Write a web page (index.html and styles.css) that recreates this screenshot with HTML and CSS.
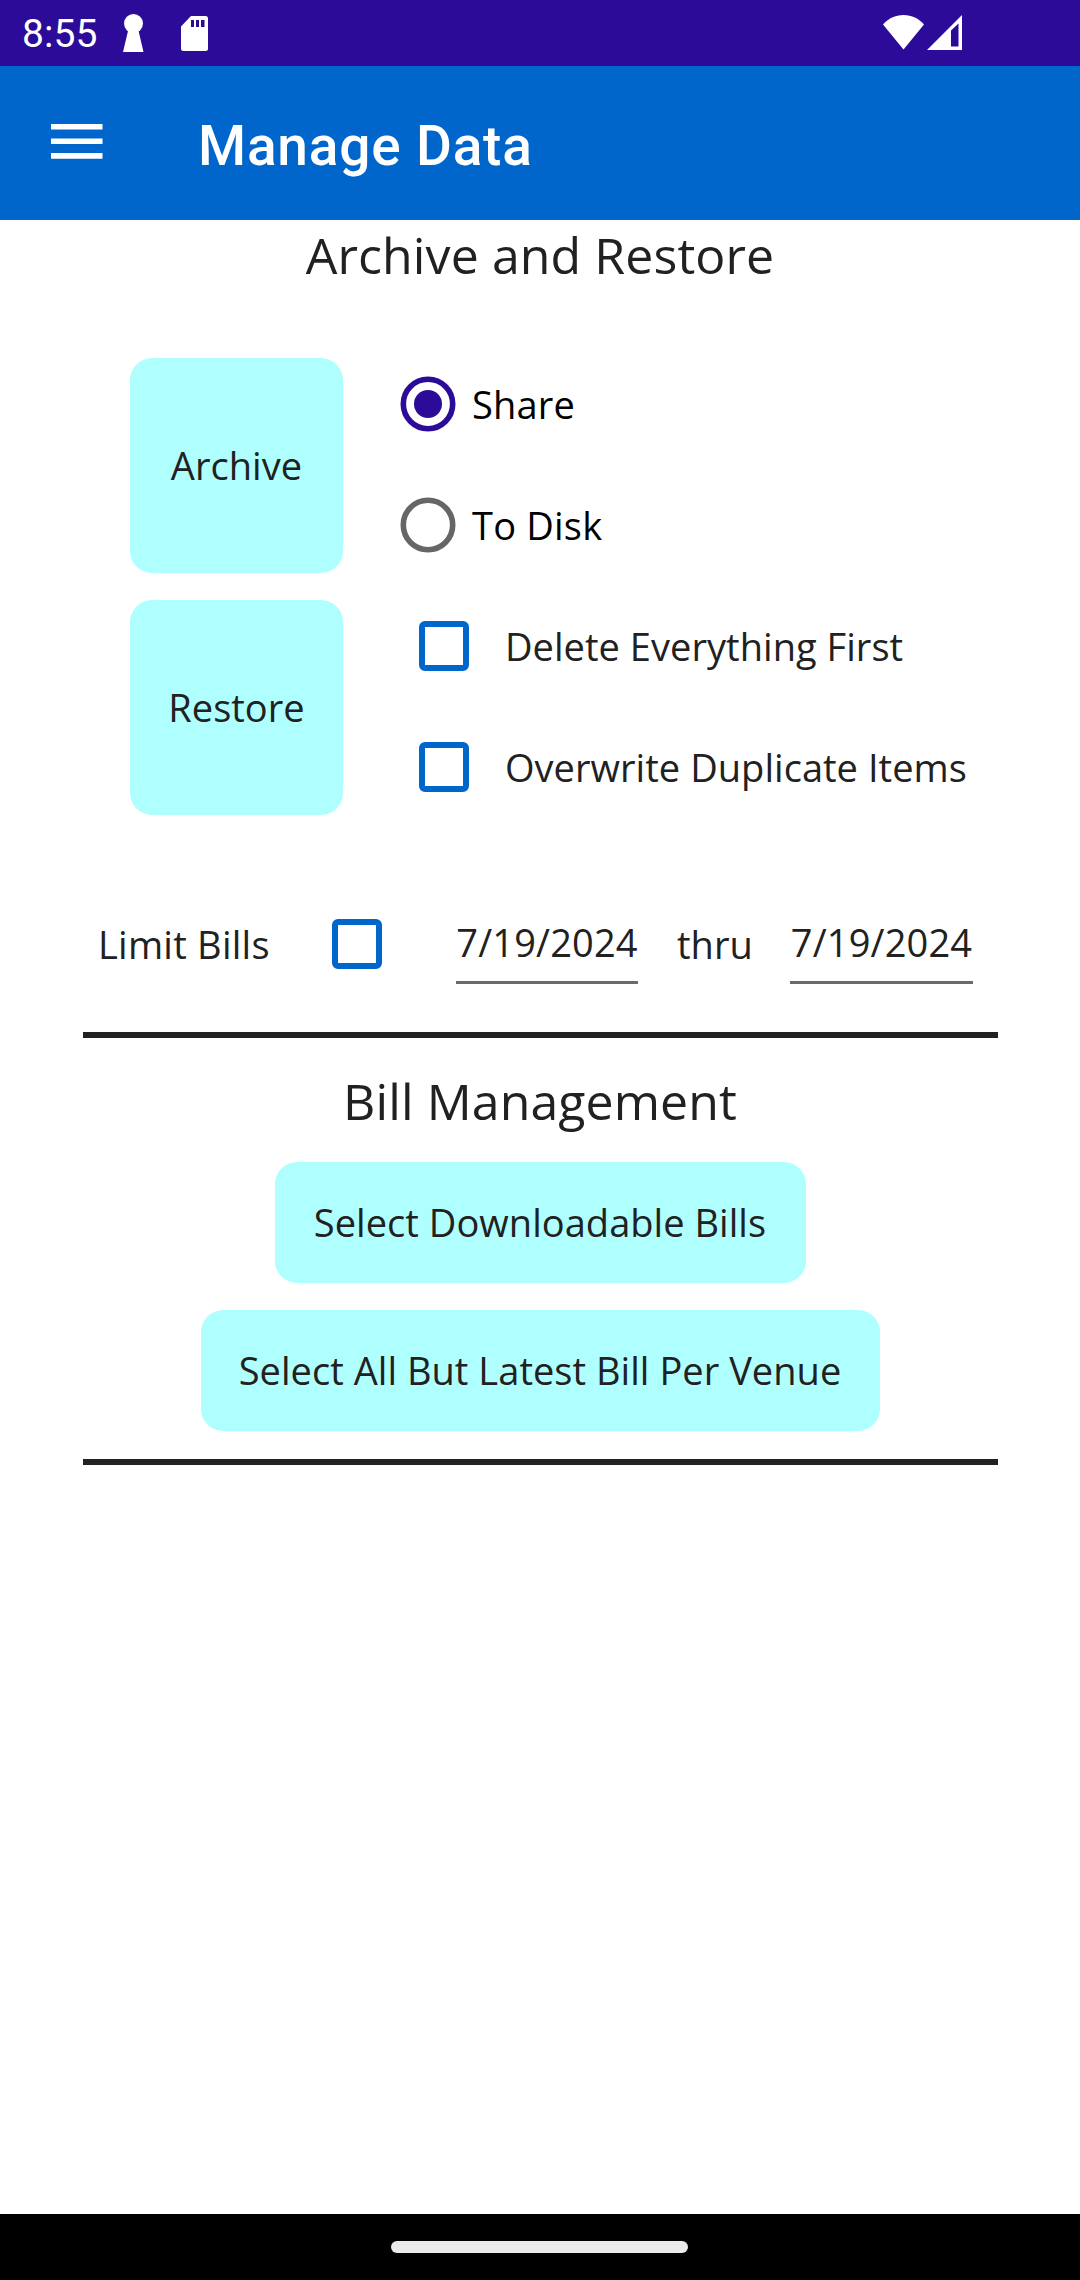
FILE: index.html
```html
<!DOCTYPE html>
<html lang="en">
<head>
<meta charset="utf-8">
<title>Manage Data</title>
<link rel="stylesheet" href="styles.css">
</head>
<body>
<div class="screen">
  <div class="status-bar">
    <span class="clock">8:55</span>
    <svg class="keyhole" width="22" height="40" viewBox="0 0 22 40" fill="#fff"><circle cx="10.500" cy="10.500" r="9.500"/><path d="M6 15h9l.6 3L20.500 39H0L5 18z"/></svg>
    <svg class="sd-card" width="27" height="35" viewBox="0 0 27 35"><path fill="#fff" fill-rule="evenodd" d="M10 0h14.500a2.500 2.500 0 0 1 2.500 2.500v30a2.500 2.500 0 0 1-2.500 2.500h-22a2.500 2.500 0 0 1-2.500-2.500V10.500zM10 4v7h3V4zM15 4v7h3V4zM20 4v7h3.500V4z"/></svg>
    <svg class="wifi" width="41" height="35" viewBox="0 0 41 35" fill="#fff"><path d="M20.500 34.500 0 9.500C5.500 3.500 12 0 20.500 0S35.500 3.500 41 9.500z"/></svg>
    <svg class="signal" width="35" height="35" viewBox="0 0 35 35"><path fill="#fff" fill-rule="evenodd" d="M0 35 35 0v35zM24 15.500V31.500h7.500V8.500z"/></svg>
  </div>
  <header class="app-bar">
    <svg class="menu" width="52" height="36" viewBox="0 0 52 36" fill="#fff"><path d="M0 0h51.500v5.500H0zM0 14.500h51.500V20H0zM0 29h51.500v5.700H0z"/></svg>
    <h1 class="title">Manage Data</h1>
  </header>
  <main class="content">
    <h2 class="heading">Archive and Restore</h2>
    <section class="transfer">
      <div class="actions">
        <button class="button square">Archive</button>
        <button class="button square">Restore</button>
      </div>
      <div class="options">
        <label class="option radio-option"><svg class="radio" width="56" height="56" viewBox="0 0 56 56"><circle cx="28" cy="28" r="24.700" fill="none" stroke="#2b0b98" stroke-width="5.600"/><circle cx="28" cy="28" r="14" fill="#2b0b98"/></svg><span>Share</span></label>
        <label class="option radio-option"><svg class="radio" width="56" height="56" viewBox="0 0 56 56"><circle cx="28" cy="28" r="24.700" fill="none" stroke="#666" stroke-width="5.600"/></svg><span>To Disk</span></label>
        <label class="option check-option"><span class="checkbox"></span><span>Delete Everything First</span></label>
        <label class="option check-option"><span class="checkbox"></span><span>Overwrite Duplicate Items</span></label>
      </div>
    </section>
    <section class="limit">
      <span class="limit-label">Limit Bills</span>
      <span class="checkbox"></span>
      <span class="date from">7/19/2024</span>
      <span class="thru">thru</span>
      <span class="date to">7/19/2024</span>
    </section>
    <div class="divider"></div>
    <section class="bills">
      <h2 class="heading">Bill Management</h2>
      <button class="button wide">Select Downloadable Bills</button>
      <button class="button wider">Select All But Latest Bill Per Venue</button>
    </section>
    <div class="divider"></div>
  </main>
  <div class="nav-bar"><div class="handle"></div></div>
</div>
</body>
</html>
```
FILE: styles.css
```css
* { box-sizing: border-box; }
body { margin: 0; background: #fff; }
.screen {
  width: 1080px;
  height: 2280px;
  display: flex;
  flex-direction: column;
  font: 38px/52px "Open Sans", sans-serif;
  letter-spacing: 0.04px;
  color: #212121;
  white-space: nowrap;
}
svg { display: block; flex: none; }

.status-bar {
  height: 66px;
  flex: none;
  display: flex;
  align-items: flex-start;
  padding: 0 118px 0 22px;
  background: #2b0b98;
  color: #fff;
}
.clock { width: 101px; padding-top: 11px; font: 39px/46px Roboto, sans-serif; }
.keyhole { margin-top: 13px; }
.sd-card { margin: 16px 0 0 36px; }
.wifi { margin: 15px 3px 0 auto; }
.signal { margin-top: 15px; }

.app-bar {
  height: 154px;
  flex: none;
  display: flex;
  padding-left: 51px;
  background: #0066cc;
  color: #fff;
}
.menu { margin-top: 58px; }
.title { margin: 48px 0 0 95px; font: 500 55px/64px Roboto, sans-serif; letter-spacing: 0.8px; }

.content { flex: 1; }
.heading { margin: 0; font-size: 50px; line-height: 70px; font-weight: 400; letter-spacing: 0.1px; text-align: center; }

.transfer { display: flex; margin-top: 53px; padding-left: 130px; }
.actions { display: flex; flex-direction: column; gap: 27px; padding-top: 15px; }
.button {
  padding: 0 0 2px;
  border: 0;
  border-radius: 22px;
  background: #afffff;
  color: inherit;
  font: inherit;
  letter-spacing: inherit;
  height: 121px;
}
.square { width: 213px; height: 215px; }
.options { padding-left: 57px; }
.option { display: flex; align-items: center; height: 121px; }
.radio-option { gap: 16px; color: #000; letter-spacing: 0.2px; }
.check-option { gap: 36px; padding-left: 19px; }
.checkbox { flex: none; width: 50px; height: 50px; border: 6px solid #0066cc; border-radius: 6px; }

.limit { display: flex; align-items: center; height: 121px; margin-top: 56px; padding-left: 98px; }
.limit-label { width: 234px; letter-spacing: 0.25px; }
.date {
  width: 183px;
  height: 80px;
  padding-top: 12px;
  border-bottom: 3px solid #6a6a6a;
  letter-spacing: 0.15px;
  text-align: center;
}
.from { width: 182px; margin-left: 74px; }
.thru { width: 152px; padding-left: 39px; }

.divider { height: 6px; margin: 28px 82px 0 83px; background: #212121; }
.bills { display: flex; flex-direction: column; align-items: center; padding-top: 28px; }
.wide { width: 531px; margin-top: 26px; }
.wider { width: 679px; margin-top: 27px; }

.nav-bar { flex: none; height: 66px; padding: 27px 0 0 391px; background: #000; }
.handle { width: 297px; height: 12px; border-radius: 6px; background: #ebebeb; }
```
